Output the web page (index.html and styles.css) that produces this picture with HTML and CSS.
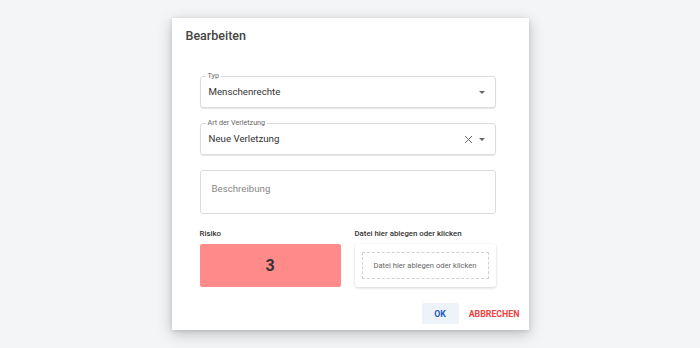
FILE: index.html
```html
<!DOCTYPE html>
<html lang="de">
<head>
<meta charset="utf-8">
<link rel="stylesheet" href="styles.css">
</head>
<body>
<div class="dialog">
  <h2 class="title">Bearbeiten</h2>
  <div class="form">
    <div class="field">
      <span class="float-label">Typ</span>
      <span class="value">Menschenrechte</span>
      <span class="icons"><span class="caret"></span></span>
    </div>
    <div class="field">
      <span class="float-label">Art der Verletzung</span>
      <span class="value">Neue Verletzung</span>
      <span class="icons">
        <svg class="clear" width="9" height="9" viewBox="0 0 9 9"><path d="M1 1L8 8M8 1L1 8" stroke="#666" stroke-width="1" fill="none"/></svg>
        <span class="caret"></span>
      </span>
    </div>
    <div class="textarea">Beschreibung</div>
    <div class="bottom">
      <div class="col">
        <div class="col-label">Risiko</div>
        <div class="risk">3</div>
      </div>
      <div class="col">
        <div class="col-label">Datei hier ablegen oder klicken</div>
        <div class="upload">
          <div class="drop">Datei hier ablegen oder klicken</div>
        </div>
      </div>
    </div>
  </div>
  <div class="actions">
    <button class="btn ok">OK</button>
    <button class="btn cancel">ABBRECHEN</button>
  </div>
</div>
</body>
</html>
```

FILE: styles.css
```css
html, body {
  margin: 0;
  padding: 0;
}
body {
  width: 700px;
  height: 348px;
  background: #f4f5f7;
  display: flex;
  align-items: center;
  justify-content: center;
  font-family: Roboto, "Liberation Sans", sans-serif;
  color: #333;
}
.dialog {
  width: 357px;
  height: 312px;
  background: #fff;
  box-shadow: 0 4px 14px rgba(0,0,0,0.22), 0 1px 4px rgba(0,0,0,0.12);
  box-sizing: border-box;
  display: flex;
  flex-direction: column;
}
.title {
  margin: 0;
  padding: 10px 0 0 14px;
  font-size: 12.5px;
  font-weight: 500;
  color: #444;
  line-height: 16px;
}
.form {
  padding: 32px 33px 0 28px;
  display: flex;
  flex-direction: column;
  gap: 15px;
}
.field {
  position: relative;
  height: 32px;
  border: 1px solid #dcdcdc;
  border-radius: 3px;
  box-shadow: 0 1px 1px rgba(0,0,0,0.1);
  box-sizing: border-box;
  display: flex;
  align-items: center;
  padding: 0 10px 0 8px;
}
.float-label {
  position: absolute;
  left: 5px;
  top: -5px;
  padding: 0 2px;
  background: #fff;
  font-size: 7.2px;
  line-height: 8px;
  color: #666;
}
.value {
  flex: 1;
  font-size: 9.7px;
  color: #333;
  padding-top: 1px;
  margin-top: -2px;
}
.icons {
  display: flex;
  align-items: center;
  gap: 6px;
}
.caret {
  width: 0;
  height: 0;
  border-left: 3px solid transparent;
  border-right: 3px solid transparent;
  border-top: 3px solid #666;
}
.clear {
  display: block;
}
.textarea {
  height: 44px;
  border: 1px solid #dcdcdc;
  border-radius: 3px;
  box-sizing: border-box;
  padding: 12px 0 0 11px;
  font-size: 9.7px;
  color: #888;
  line-height: 12px;
}
.bottom {
  display: flex;
  gap: 14px;
}
.col {
  flex: 1;
  display: flex;
  flex-direction: column;
}
.col-label {
  font-size: 7.8px;
  font-weight: 500;
  color: #333;
  line-height: 9px;
  margin-bottom: 6px;
}
.risk {
  height: 43px;
  background: #ff8a8a;
  border-radius: 2px;
  display: flex;
  align-items: center;
  justify-content: center;
  font-size: 16px;
  font-weight: 700;
  color: #333;
}
.upload {
  height: 43px;
  border-radius: 3px;
  box-shadow: 0 1px 3px rgba(0,0,0,0.18);
  box-sizing: border-box;
  padding: 8px 7px;
  display: flex;
}
.drop {
  flex: 1;
  border: 1px dashed #d0d0d0;
  display: flex;
  align-items: center;
  justify-content: center;
  font-size: 7.6px;
  color: #666;
}
.actions {
  margin-top: auto;
  display: flex;
  justify-content: flex-end;
  align-items: center;
  gap: 10px;
  padding: 0 9px 6px 0;
}
.btn {
  border: none;
  background: none;
  font-family: Roboto, "Liberation Sans", sans-serif;
  font-size: 8.8px;
  font-weight: 700;
  padding: 0;
  cursor: pointer;
}
.ok {
  width: 37px;
  height: 21px;
  background: #eef3fa;
  border-radius: 2px;
  color: #1e5bb8;
}
.cancel {
  color: #f04141;
  height: 21px;
}
```
